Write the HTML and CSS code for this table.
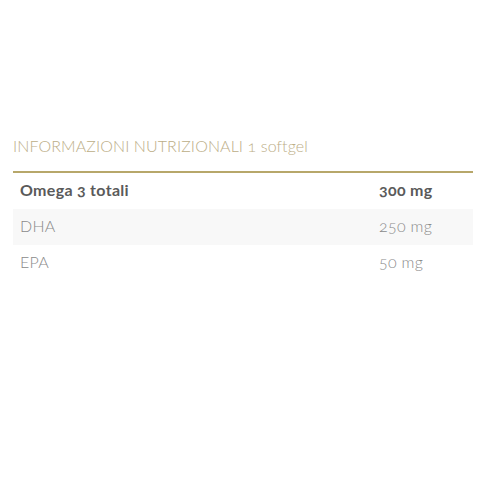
FILE: index.html
```html
<!DOCTYPE html>
<html><head><meta charset="utf-8"><link rel="stylesheet" href="styles.css"></head>
<body>
<section class="nutri">
  <h3 class="nutri-title">INFORMAZIONI NUTRIZIONALI 1 softgel</h3>
  <table class="nutri-table">
    <tr class="row row-main"><td class="name">Omega 3 totali</td><td class="val">300 mg</td></tr>
    <tr class="row row-alt"><td class="name">DHA</td><td class="val">250 mg</td></tr>
    <tr class="row"><td class="name">EPA</td><td class="val">50 mg</td></tr>
  </table>
</section>
</body></html>
```
FILE: styles.css
```css
html,body{margin:0;padding:0;background:#fff;}
body{font-family:Lato,"Open Sans",sans-serif;font-variant-numeric:oldstyle-nums;}
.nutri{width:460px;margin:0 0 0 13px;padding-top:134px;}
.nutri-title{margin:0;font-weight:300;font-size:16px;line-height:24px;color:#bcae87;padding-bottom:13px;border-bottom:2px solid #b7a76a;letter-spacing:0.1px;}
.nutri-table{width:100%;border-collapse:collapse;}
.row td{height:32px;padding:0 7px 4px;font-size:16px;font-weight:300;color:#8a8a8a;vertical-align:middle;letter-spacing:0.3px;}
.row-main td{font-weight:700;color:#5a5a5a;}
.row-alt td{background:#f8f8f8;}
.val{width:87px;}
```
